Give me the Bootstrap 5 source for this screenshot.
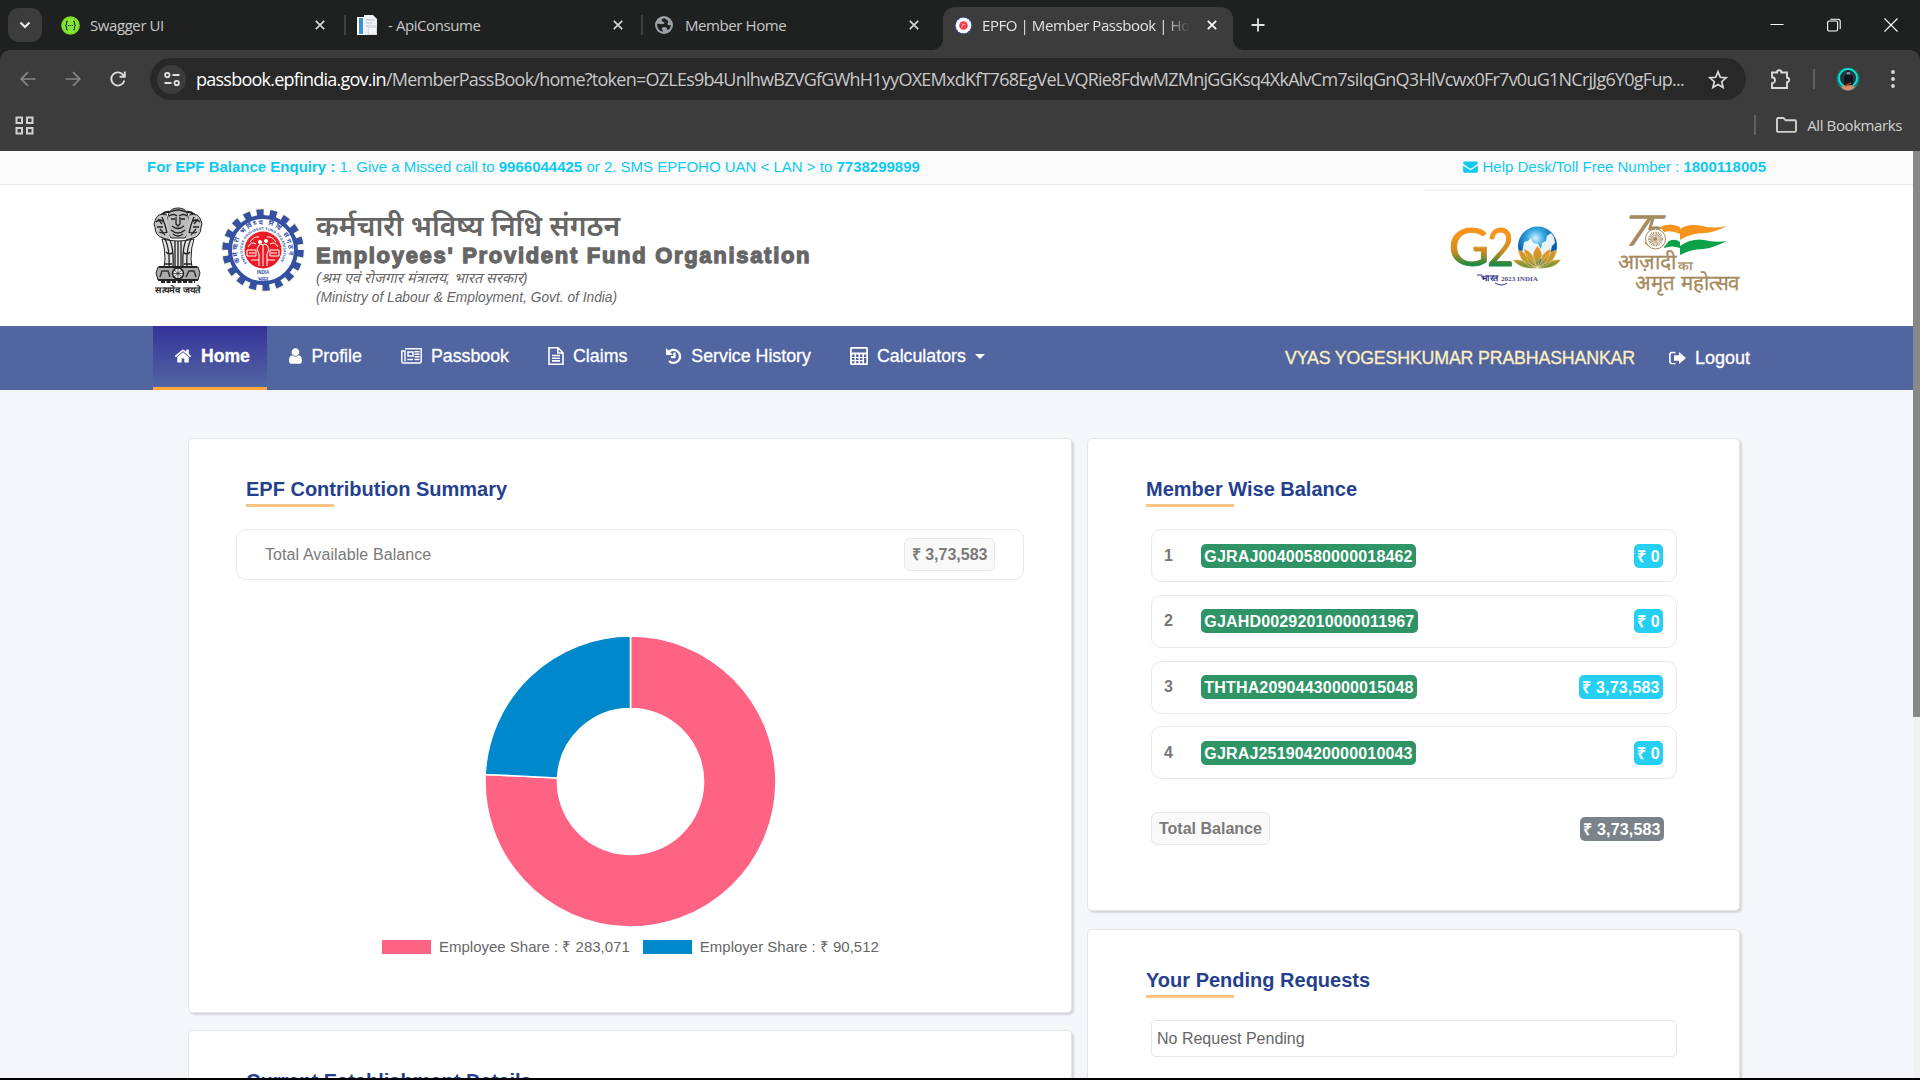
<!DOCTYPE html>
<html lang="en">
<head>
<meta charset="utf-8">
<title>EPFO | Member Passbook | Home</title>
<link href="https://cdn.jsdelivr.net/npm/bootstrap@5.3.0/dist/css/bootstrap.min.css" rel="stylesheet">
<style>
body{height:1080px;overflow:hidden;background:#000;font-family:"Liberation Sans",Arial,sans-serif;color:#666;line-height:1.5}
svg{display:block;flex:none;overflow:visible}
.chrome{font-family:"Open Sans","Noto Sans",sans-serif;color:#e3e3e3}
.tabstrip{height:50px;background:#1f2120;padding-left:8px}
.tabmenu{width:34px;height:34px;border-radius:11px;background:#3c3c3c}
.tab{height:50px;font-size:15px;letter-spacing:-.42px;color:#c7c7c7;white-space:nowrap}
.tab .tt{flex:1;overflow:hidden}
.tabsep{width:2px;height:20px;background:#3f4140}
.tab-on{background:#3c3c3c;height:43px;border-radius:12px 12px 0 0;align-self:flex-end;width:290px;padding:0 16px 7px 11px;position:relative;color:#e3e3e3}
.tab-on::before,.tab-on::after{content:"";position:absolute;bottom:0;width:12px;height:12px}
.tab-on::before{left:-12px;background:radial-gradient(circle at 0 0,transparent 12px,#3c3c3c 12.5px)}
.tab-on::after{right:-12px;background:radial-gradient(circle at 100% 0,transparent 12px,#3c3c3c 12.5px)}
.fade-t{-webkit-mask-image:linear-gradient(90deg,#000 88%,transparent);mask-image:linear-gradient(90deg,#000 88%,transparent)}
.toolbar{height:58px;background:#3c3c3c;border-radius:10px 10px 0 0}
.toolwrap{background:#1f2120}
.omni{width:1596px;height:42px;border-radius:21px;background:#282828;padding-left:7px;padding-right:18px}
.site{width:29px;height:29px;border-radius:50%;background:#3c3c3c}
.url{font-size:18px;color:#c7c7c7;white-space:nowrap;letter-spacing:-.753px}
.url b{font-weight:400;color:#fff}
.bmbar{height:43px;background:#3c3c3c;font-size:15px;letter-spacing:-.4px;color:#d2d2d2;padding:0 18px 9px 15px}
.vsep{width:2px;height:20px;background:#5f5f5f}
.pagebox{height:927px;background:#f5f6fa;overflow:hidden}
.scroller{width:7px;background:#f1f1f1}
.scroller div{height:566px;background:#888}
.topbar{height:34px;background:#fbfbfb;border-bottom:1px solid #ebebeb;color:#0dcaf0;font-size:15px;padding:0 147px 1px 147px}
.head{height:141px;background:#fff;padding:0 172px 0 153px}
.t-hi{font-size:28.2px;line-height:32px;font-weight:600;font-family:"Noto Sans","Noto Sans Devanagari",sans-serif}
.t-en{font-size:22px;line-height:24px;font-weight:700;-webkit-text-stroke:1.3px #666;letter-spacing:1.7px;padding-top:3px}
.t-sm{font-size:14.4px;line-height:20px;font-style:italic}
.t-xs{font-size:13.75px}
.mainnav{height:64px;background:#5165a1;padding-left:153px;padding-right:163px;font-size:17.8px;color:#fff;-webkit-text-stroke:.3px currentColor}
.navi{padding:0 19.5px 4px;gap:9px;height:64px}
.navi.on{font-weight:700;width:114px;padding:0 0 1px 21px;gap:9px;font-size:17.6px;background:linear-gradient(#35339a,#5165a1);border-bottom:3px solid #ffa83d}
.caret{border:5px solid transparent;border-top-color:#fff;border-bottom:0}
.uname{color:#ffefc1;letter-spacing:-.17px}
.lo{font-size:18px}
.pane{background:#fff;border:1px solid #e5e5e5;border-radius:5px;box-shadow:2px 2px 2px rgba(0,0,0,.13)}
.cols{padding:48px 0 0 188px;gap:15px}
.ttl{font-size:20px;font-weight:700;color:#243f8e;line-height:30px;margin:0;position:relative;height:34px}
.ttl::after{content:"";display:block;width:88px;height:3px;background:#fec587}
.avail{border:1px solid #e9e9e9;border-radius:10px;height:51px;margin:21px 47px 0 47px;padding:0 28px;color:#7a7a7a}
.chip{background:#f9f9f9;border:1px solid #e9e9e9;border-radius:6px;font-weight:700;color:#7a7a7a;padding:0 6.5px;height:33px;line-height:31px}
.lg{font-size:15px;gap:8px}
.sw{width:49px;height:14px}
.mrow{border:1px solid #e9e9e9;border-radius:10px;height:53px;margin-bottom:12.8px;padding:0 13px 0 12px;font-weight:700;color:#777}
.mrow .n{width:37px}
.bd{border-radius:5px;color:#fff;font-weight:700;height:24px;line-height:25px;padding:0 3.300px;letter-spacing:.17px}
.g{background:#2f9466}.c{background:#25cff2}.s{background:#7a828a}
</style>
</head>
<body>
<div class="chrome">
 <div class="tabstrip d-flex align-items-center">
  <div class="tabmenu d-flex align-items-center justify-content-center"><svg width="12" height="8" viewBox="0 0 12 8" fill="none" stroke="#e8e8e8" stroke-width="2.2"><path d="M1.5 1.5 6 6l4.500-4.500"/></svg></div>
  <div class="tab d-flex align-items-center" style="width:302px;padding:0 19px 0 19px">
   <svg width="19" height="19" viewBox="0 0 19 19"><circle cx="9.500" cy="9.500" r="9.300" fill="#85ea2d"/><circle cx="9.500" cy="9.500" r="8" fill="none" stroke="#6bc420" stroke-width=".6"/><path d="M6.800 5.200c-1.800 0-1.200 1.500-1.300 2.800 0 .9-.5 1.400-1.300 1.500.8.100 1.300.6 1.300 1.500.1 1.300-.5 2.800 1.300 2.800M12.200 5.200c1.800 0 1.200 1.500 1.300 2.800 0 .9.500 1.400 1.300 1.500-.8.100-1.300.6-1.300 1.500-.1 1.300.5 2.800-1.300 2.800" fill="none" stroke="#173647" stroke-width="1.200"/><path d="M7 9.500h5" stroke="#173647" stroke-width="1.200" stroke-dasharray="1.200 .7"/></svg>
   <span class="tt" style="margin-left:10px">Swagger UI</span><svg width="10" height="10" stroke="#d5d5d5" stroke-width="1.700"><path d="m.8.8 8.400 8.400m0-8.400L.8 9.200"/></svg></div>
  <div class="tabsep"></div>
  <div class="tab d-flex align-items-center" style="width:295px;padding:0 18px 0 11px">
   <svg width="21" height="21" viewBox="0 0 21 21"><path d="M0 2h14v18H0z" fill="#fff"/><path d="M2 3h4v16H2z" fill="#3c93cc"/><path d="M7 0h9l4 4v16H7z" fill="#eef0f3"/><path d="M9 5h8M9 8h6M9 11h5" stroke="#b9c0cb"/><path d="M11 10h9v10h-9z" fill="#d9dde3"/><path d="M12 13h7v6h-7z" fill="#f5f6f8"/></svg>
   <span class="tt" style="margin-left:10px">- ApiConsume</span><svg width="10" height="10" stroke="#d5d5d5" stroke-width="1.700"><path d="m.8.8 8.400 8.400m0-8.400L.8 9.200"/></svg></div>
  <div class="tabsep"></div>
  <div class="tab d-flex align-items-center" style="width:300px;padding:0 24px 0 12px">
   <svg width="18" height="18" viewBox="0 0 18 18"><circle cx="9" cy="9" r="9" fill="#9aa0a6"/><path d="M9.500 2.200c-2.300 0-3.200 1.600-2.600 2.800.6 1.100 2.100.4 2.500 1.400.4 1.200-1.200 1.200-2.300 1.900L2 7.800C2 12 4 15 8 15.800c.3-1.500-.9-1.800-1.200-2.800-.2-1 .6-1.400 1.400-2.100 1.300.2 2.600 0 3.300.8.800 1 .4 1.800 1.600 2.400 1.800-1.400 2.700-3 2.800-5-1.800.4-2.900.2-3.300-.9-.4-1.200.9-1.600.6-2.800-.3-1.400-1.800-1.600-3.700-3.200z" fill="#1f2120"/></svg>
   <span class="tt ms-2 ps-1">Member Home</span><svg width="10" height="10" stroke="#d5d5d5" stroke-width="1.700"><path d="m.8.8 8.400 8.400m0-8.400L.8 9.200"/></svg></div>
  <div class="tab tab-on d-flex align-items-center">
   <svg width="19" height="19" viewBox="0 0 19 19"><circle cx="9.500" cy="9.500" r="8" fill="#fff" stroke="#3f57b0" stroke-width="1.500" stroke-dasharray="1.700 1.450"/><circle cx="9.500" cy="9.500" r="7.400" fill="#fff"/><circle cx="9.500" cy="9.500" r="4.300" fill="#ef3f49"/><path d="m7.500 12 1.500-4 2.500 1" stroke="#fbb" fill="none" stroke-width=".8"/></svg>
   <span class="tt fade-t" style="max-width:208px;margin-left:9px">EPFO | Member Passbook | Home</span><svg class="ms-auto" width="10" height="10" stroke="#fff" stroke-width="1.700"><path d="m.8.8 8.400 8.400m0-8.400L.8 9.200"/></svg></div>
  <svg style="margin-left:18px" width="14" height="14" stroke="#e3e3e3" stroke-width="1.800"><path d="M7 .5v13M.5 7h13"/></svg>
  <div class="d-flex align-items-center ms-auto" style="gap:43px;padding-right:22px">
   <svg width="14" height="14" stroke="#fff"><path d="M.5 6.500h13"/></svg>
   <svg width="14" height="14" viewBox="0 0 14 14" fill="none" stroke="#fff" stroke-width="1.100"><rect x=".6" y="3" width="10" height="10" rx="1.600"/><path d="M3.400 1.200h7.500a2.300 2.300 0 0 1 2.300 2.300V11"/></svg>
   <svg width="14" height="14" stroke="#fff" stroke-width="1.100"><path d="m.5.5 13 13m0-13-13 13"/></svg>
  </div>
 </div>
 <div class="toolwrap"><div class="toolbar d-flex align-items-center">
  <svg width="16" height="16" style="margin-left:20px" fill="none" stroke="#858585" stroke-width="1.700"><path d="M15.500 8H1.500M8 1.200 1.200 8 8 14.800"/></svg>
  <svg width="16" height="16" style="margin-left:29px" fill="none" stroke="#858585" stroke-width="1.700"><path d="M.5 8h14M8 1.200 14.800 8 8 14.800"/></svg>
  <svg width="16" height="16" style="margin-left:29px" fill="none" stroke="#dadada" stroke-width="1.900"><path d="M14.300 9.500A6.600 6.600 0 1 1 13.500 4.500M14.800.5v5.300H9.500"/></svg>
  <div class="omni d-flex align-items-center" style="margin-left:24px">
   <div class="site d-flex align-items-center justify-content-center"><svg width="16" height="16" fill="none" stroke="#e3e3e3" stroke-width="1.800"><circle cx="3.300" cy="4" r="2.200"/><path d="M8.500 4h7M.5 12h7"/><circle cx="12.700" cy="12" r="2.200"/></svg></div>
   <span class="url" style="margin-left:10px"><b>passbook.epfindia.gov.in</b>/MemberPassBook/home?token=OZLEs9b4UnlhwBZVGfGWhH1yyOXEMxdKfT768EgVeLVQRie8FdwMZMnjGGKsq4XkAlvCm7siIqGnQ3HlVcwx0Fr7v0uG1NCrjJg6Y0gFup...</span>
   <svg class="ms-auto" width="20" height="19" viewBox="0 0 20 19" fill="none" stroke="#dadada" stroke-width="1.700"><path d="m10 1.800 2.300 5.500 5.900.5-4.500 3.900 1.400 5.800-5.100-3.100-5.100 3.100 1.400-5.800-4.500-3.900 5.900-.5z"/></svg>
  </div>
  <svg width="22" height="22" viewBox="0 0 22 22" style="margin-left:24px" fill="none" stroke="#dadada" stroke-width="1.900"><path d="M2 4.500h5a2 2 0 0 1 4.400 0h5.600v5.200a2 2 0 0 1 0 4.400V20H2v-4.700a3 3 0 0 0 0-6z"/></svg>
  <div class="vsep" style="margin-left:21px"></div>
  <svg width="24" height="24" viewBox="0 0 24 24" style="margin-left:21px"><circle cx="12" cy="12" r="11.500" fill="#127c78"/><circle cx="12" cy="11" r="9" fill="#1c3b46" stroke="#12e3cf" stroke-width="1.800"/><path d="M8 19V11q0-3 2-3.500 0-4 2.500-4T15 7.500q2.500 1 2 5L16.500 19z" fill="#141318"/><path d="M10.500 5.500q2-1.500 4 0v2h-4z" fill="#7b8aa0"/><path d="M5 20q3-3 7-1.500 4-1.500 7 1.500-3 3.500-7 3.500T5 20z" fill="#d98b6e"/><path d="m9 19 6-3" stroke="#a4402f" stroke-width="1.500"/></svg>
  <svg width="4" height="18" style="margin-left:31px" fill="#dadada"><circle cx="2" cy="2" r="1.900"/><circle cx="2" cy="9" r="1.900"/><circle cx="2" cy="16" r="1.900"/></svg>
 </div></div>
 <div class="bmbar d-flex align-items-center">
  <svg width="19" height="19" viewBox="0 0 19 19" fill="none" stroke="#d0d0d0" stroke-width="2"><path d="M1.500 1.500h5.500v5.500H1.500zM12 1.500h5.500v5.500H12zM1.500 12h5.500v5.500H1.500zM12 12h5.500v5.500H12z"/></svg>
  <div class="vsep ms-auto"></div>
  <svg width="21" height="16" viewBox="0 0 21 16" style="margin:0 10px 0 20px" fill="none" stroke="#d0d0d0" stroke-width="1.900"><path d="M1 13.500V2.300Q1 1 2.300 1H7.500l2.200 2.300h9Q20 3.300 20 4.600v8.900q0 1.400-1.300 1.400H2.300Q1 14.900 1 13.500z"/></svg>
  <span>All Bookmarks</span>
 </div>
</div>

<div class="pagebox d-flex">
 <div class="flex-grow-1">
  <div class="topbar d-flex align-items-center justify-content-between">
   <span><b>For EPF Balance Enquiry :</b> 1. Give a Missed call to <b>9966044425</b> or 2. SMS EPFOHO UAN &lt; LAN &gt; to <b>7738299899</b></span>
   <span class="d-flex align-items-center gap-1"><svg width="15" height="12" viewBox="0 0 16 13" fill="#0dcaf0"><path d="M0 2q0-1.500 1.500-1.500h13Q16 .5 16 2q0 1-1.200 1.900L9.200 7.800q-1.200.8-2.400 0L1.200 3.900Q0 3 0 2zM0 4.800l6 4.200q2 1.300 4 0l6-4.200v6.400q0 1.500-1.500 1.500h-13Q0 12.700 0 11.200z"/></svg><span>Help Desk/Toll Free Number : <b>1800118005</b></span></span>
  </div>
  <header class="head d-flex">
   <svg width="50" height="88" viewBox="0 0 50 88" style="margin-top:22px" fill="none" stroke="#222" stroke-width="1">
    <path d="M8 8q6-5 11-2M42 8q-6-5-11-2" stroke-width="2"/>
    <path d="M16 6q2-5 9-5t9 5l3 10q0 9-5 15H18q-5-6-5-15z" fill="#bbb"/>
    <path d="M17 5q8-4 16 0M16 9q5-3 8 0M26 9q5-3 8 0M18 12h4m6 0h4M23 10v7l2 2 2-2v-7M19 19q6 5 12 0M18 23q7 6 14 0M20 27q5 4 10 0" stroke-width="1.300"/>
    <path d="M14 8Q4 5 2 14q-2 3 0 6 0 9 8 11l7 2M36 8q10-3 12 6 2 3 0 6 0 9-8 11l-7 2" fill="#c4c4c4"/>
    <path d="M3 15q4-4 8 0M4 20h6M6 25q4 2 8 0M47 15q-4-4-8 0M46 20h-6M44 25q-4 2-8 0M9 10l3 8 2 8M41 10l-3 8-2 8M5 12l4 5M45 12l-4 5M7 22l5 6M43 22l-5 6" stroke-width="1.300"/>
    <path d="M9 32q3 8 3 20l-1 8h28l-1-8q0-12 3-20-16 4-32 0z" fill="#e2e2e2"/>
    <path d="M12 32q5 10 4 28M17 33q4 10 3 27M22 34v26M28 34v26M33 33q-4 10-3 27M38 32q-5 10-4 28M25 34v25M13 45q4 4 7 0M30 45q4 4 7 0M11 57h8M31 57h8" stroke-width="1.300"/>
    <path d="M5 60h40l2 6-2 7H5l-2-7z" fill="#aaa"/><path d="M6 60h38M5 73h40" stroke-width="2"/>
    <circle cx="25" cy="66.500" r="5.500" fill="#eee" stroke-width="1.500"/><path d="M25 61v11M19.500 66.500h11M21 63l8 7M29 63l-8 7" stroke-width=".7"/>
    <path d="m7 70 2-6h6l2 6M33 70l3-6h5l2 6" stroke="#333" stroke-width="1.500"/>
    <path d="M8 75h34" stroke-width="2" stroke-dasharray="4 1.500"/>
    <text x="25" y="86" font-size="8.500" font-weight="700" text-anchor="middle" fill="#222" stroke="none" textLength="46" lengthAdjust="spacingAndGlyphs">सत्यमेव जयते</text>
   </svg>
   <svg width="84" height="84" viewBox="-42 -42 84 84" style="margin:23px 0 0 18px">
    <circle r="37" fill="none" stroke="#f3f1cc" stroke-width="9.500" stroke-dasharray="8.800 4.117" stroke-dashoffset="1"/>
    <circle r="37" fill="none" stroke="#3450a3" stroke-width="7.500" stroke-dasharray="6.800 6.117"/>
    <circle r="33" fill="#fff" stroke="#3450a3" stroke-width="4"/>
    <circle r="18.500" fill="#ec1c24"/>
    <g fill="none" stroke="#fff" stroke-width="1"><path d="M-15-3q3-6 8-3M15-3q-3-6-8-3M-16 0h9v6h-9zM16 0H7v6h9zM-12 10h8M12 10H4M-13-8q4-6 9-5M13-8q-4-6-9-5M-14 3h6M14 3H8"/><path d="M-4 16v-12l-2-5 2-4q2-2 4 0l0 21M4 16v-12l2-5-2-4q-2-2-4 0" fill="#ec1c24"/><circle cx="-3" cy="-8" r="1.600" fill="#fff"/><circle cx="3" cy="-9" r="1.600" fill="#fff"/></g>
    <defs><path id="arcA" d="M-22.500 12A25.500 25.500 0 1 1 22.500 12"/><path id="arcB" d="M-16 13A20.500 20.500 0 1 1 16 13"/></defs>
    <g fill="#3450a3" font-weight="700"><text font-size="6.800" textLength="97"><textPath href="#arcA" textLength="97">कर्मचारी भविष्य निधि संगठन</textPath></text>
    <text font-size="3.600"><textPath href="#arcB" textLength="89">EMPLOYEES PROVIDENT FUND ORGANISATION</textPath></text>
    <text y="24" font-size="4.500" text-anchor="middle">INDIA</text><text y="30.500" font-size="5.500" text-anchor="middle">भारत</text></g>
   </svg>
   <div style="padding:24px 0 0 11px">
    <div class="t-hi"><span>कर्मचारी भविष्य निधि संगठन</span></div>
    <div class="t-en"><span>Employees' Provident Fund Organisation</span></div>
    <div class="t-sm"><span>(श्रम एवं रोजगार मंत्रालय, भारत सरकार)</span></div>
    <div class="t-sm t-xs"><span>(Ministry of Labour &amp; Employment, Govt. of India)</span></div>
   </div>
   <div class="ms-auto" style="width:169px;padding-top:5px;margin-right:25px"><div style="height:1px;background:#eee"></div>
    <svg width="169" height="100" viewBox="1423 191 169 100">
     <defs><linearGradient id="g2" x1="0" y1="0" x2="0" y2="1"><stop offset=".35" stop-color="#f7941d"/><stop offset=".6" stop-color="#c98a22"/><stop offset=".8" stop-color="#1f8a44"/></linearGradient>
     <radialGradient id="gl" cx=".45" cy=".3"><stop offset="0" stop-color="#d8f2fd"/><stop offset=".45" stop-color="#35a8e0"/><stop offset="1" stop-color="#075da8"/></radialGradient>
     <linearGradient id="lo" x1="0" y1="0" x2="0" y2="1"><stop offset="0" stop-color="#f68a1e"/><stop offset=".6" stop-color="#c39a2b"/><stop offset="1" stop-color="#5e8e35"/></linearGradient></defs>
     <g font-family="Lato" font-size="53" fill="url(#g2)" stroke="url(#g2)" stroke-width=".9"><text x="1447.500" y="266" textLength="41" lengthAdjust="spacingAndGlyphs">G</text><text x="1486" y="266" textLength="27" lengthAdjust="spacingAndGlyphs">2</text></g>
     <circle cx="1536.500" cy="246" r="19.500" fill="url(#gl)"/>
     <path d="M1522 248l1-6 4-1 3-3 2 5 5 1 3 5 1-6 4-2 1-5 4-3 3 4 1 6-3 3-2 8-6 4-17 1-5-7z" fill="#fff" opacity=".9"/>
     <path d="M1512 260q9-2 24 8-16 2-24-8zM1560 260q-9-2-24 8 16 2 24-8zM1517 250q10 2 19 18-15-1-19-18zM1556 250q-10 2-20 18 16-1 20-18zM1523 249q10 3 13 19-11-4-13-19zM1550 249q-10 3-14 19 12-4 14-19zM1536.500 246q9 10 0 22-9-12 0-22z" fill="url(#lo)" stroke="#f7d7a0" stroke-width=".5"/>
     <text x="1480" y="281" font-size="8.500" font-weight="700" fill="#2c2c86" textLength="17" lengthAdjust="spacingAndGlyphs">भारत</text><path d="M1476 275h5M1494 283q7 4 12 0" stroke="#2c2c86" fill="none"/>
     <text x="1500" y="280.500" font-size="7" font-family="Liberation Serif" font-weight="700" fill="#4d4d90" textLength="37" lengthAdjust="spacingAndGlyphs">2023 INDIA</text>
    </svg></div>
   <svg width="123" height="95" viewBox="1618 205 123 95" style="margin-top:20px">
    <g fill="#a58a5e" font-family="Lato"><text x="0" y="0" font-size="43" transform="translate(1623 246) skewX(-8)" textLength="27" lengthAdjust="spacingAndGlyphs">7</text>
    <text x="0" y="0" font-size="43" transform="translate(1642 246) skewX(-8)" textLength="23" lengthAdjust="spacingAndGlyphs">5</text></g>
    <path d="M1660 229q9-7 20-3 3 2 1 7l-3 14q-8-3-16 3z" fill="#fff"/>
    <path d="M1660 227q10-5 20 0v7q-8-4-16-2zM1680 229q8-6 22-3 12 3 25 0-14 7-22 7-14 0-25 7z" fill="#f7941d"/>
    <path d="M1664 247l5-6q6-3 11 1v6q-8-3-16 0zM1680 246q12-8 24-6 12 3 23 1-14 7-24 8-12 0-23 6z" fill="#0ba14b"/>
    <circle cx="1655.500" cy="239" r="10" fill="#fff" stroke="#a58a5e" stroke-width="1"/><circle cx="1655.500" cy="239" r="4.200" fill="none" stroke="#a58a5e" stroke-width="6.500" stroke-dasharray=".55 .55"/><circle cx="1655.500" cy="239" r="1.800" fill="#a58a5e"/>
    <g fill="#a58a5e" stroke="#a58a5e" stroke-width=".3"><text x="1618" y="268.500" font-size="21" textLength="58" lengthAdjust="spacingAndGlyphs">आज़ादी</text><text x="1678" y="270" font-size="12" textLength="14" lengthAdjust="spacingAndGlyphs">का</text><text x="1635" y="289.500" font-size="21" textLength="105" lengthAdjust="spacingAndGlyphs">अमृत महोत्सव</text></g>
   </svg>
  </header>
  <nav class="mainnav d-flex">
   <div class="navi on d-flex align-items-center"><svg width="18" height="18" viewBox="0 0 1792 1792" fill="#fff"><path d="M1472 992v480q0 26-19 45t-45 19h-384v-384h-256v384h-384q-26 0-45-19t-19-45v-480q0-1 .5-3t.5-3l575-474 575 474q1 2 1 6zm223-69l-62 74q-8 9-21 11h-3q-13 0-21-7l-692-577-692 577q-12 8-24 7-13-2-21-11l-62-74q-8-10-7-23.500t11-21.500l719-599q32-26 76-26t76 26l244 204v-195q0-14 9-23t23-9h192q14 0 23 9t9 23v408l219 182q10 8 11 21.500t-7 23.500z"/></svg><span>Home</span></div>
   <div class="navi d-flex align-items-center"><svg style="margin-left:1px" width="15" height="18" viewBox="200 0 1400 1792" fill="#fff"><path d="M1536 1399q0 109-62.500 187t-150.500 78h-854q-88 0-150.500-78t-62.500-187q0-85 8.500-160.500t31.500-152 58.500-131 94-89 134.500-34.500q131 128 313 128t313-128q76 0 134.500 34.500t94 89 58.500 131 31.500 152 8.500 160.500zm-256-887q0 159-112.500 271.500t-271.500 112.500-271.500-112.500-112.500-271.500 112.500-271.500 271.500-112.500 271.500 112.500 112.500 271.500z"/></svg><span>Profile</span></div>
   <div class="navi d-flex align-items-center"><svg width="21" height="16" viewBox="0 0 21 16" fill="none" stroke="#fff" stroke-width="1.500"><path d="M4 .8h16.200v12.700q0 1.600-1.500 1.600H2.200Q.8 15.100.8 13.500V3H4v10.500M7 4h5v4H7zM13.500 3.800h5M13.500 6.200h5M13.500 8.700h5M6.300 11.500h5.700M13.500 11.500h5"/></svg><span>Passbook</span></div>
   <div class="navi d-flex align-items-center"><svg width="16" height="18" viewBox="0 0 16 18" fill="none" stroke="#fff" stroke-width="1.600"><path d="M1 .8h9l5 5v11.400H1zM9.800.8v5.200H15M4 8.500h8M4 11.200h8M4 13.900h8"/></svg><span>Claims</span></div>
   <div class="navi d-flex align-items-center"><svg width="16" height="17" viewBox="0 0 16 17" fill="none" stroke="#fff" stroke-width="2.300"><path d="M2.300 4.500A6.500 6.500 0 1 1 3 13M8.500 4.500v4.700H5"/><path d="M0 0v7h7z" fill="#fff" stroke="none"/></svg><span>Service History</span></div>
   <div class="navi d-flex align-items-center"><svg width="18" height="18" viewBox="0 0 18 18"><rect width="18" height="18" rx="1.500" fill="#fff"/><path d="M1.800 1.800h14.400v3.700H1.800zM2 7.500h2.500V10H2zM6 7.500h2.500V10H6zM10 7.500h2.500V10H10zM14 7.500h2.300V10H14zM2 11h2.500v2H2zM6 11h2.500v2H6zM10 11h2.500v2H10zM14 11h2.300v5.300H14zM2 14.300h2.500v2H2zM6 14.300h2.500v2H6zM10 14.300h2.500v2H10z" fill="#5165a1"/></svg><span>Calculators</span><i class="caret"></i></div>
   <div class="d-flex align-items-center ms-auto"><span class="uname">VYAS YOGESHKUMAR PRABHASHANKAR</span><svg style="margin:0 9px 0 34px" width="17" height="14" viewBox="0 0 17 14" fill="#fff"><path d="M6.500 12v1.300H3Q0 13.300 0 10.300V3.700Q0 .7 3 .7h3.500V2.200H3.200q-1.500 0-1.500 1.500v6.600q0 1.700 1.500 1.700zM10 1l7 6-7 6V9.700H5V4.300h5z"/></svg><span class="lo">Logout</span></div>
  </nav>
  <main class="cols d-flex align-items-start">
   <div style="width:884px">
    <section class="pane" style="height:575px;padding-top:35px">
     <h2 class="ttl" style="margin-left:57px"><span>EPF Contribution Summary</span></h2>
     <div class="avail d-flex align-items-center justify-content-between"><span style="letter-spacing:.09px">Total Available Balance</span><span class="chip">₹ 3,73,583</span></div>
     <svg style="margin:56px auto 0" width="291" height="291" viewBox="-145.500 -145.500 291 291" stroke="#fff" stroke-width="1.600"><path d="M0-145.500A145.500 145.500 0 1 1-145.330-7.040L-72.920-3.530A73 73 0 1 0 0-73z" fill="#ff6384"/><path d="M-145.330-7.040A145.500 145.500 0 0 1 0-145.500V-73A73 73 0 0 0-72.920-3.530z" fill="#0088cc"/></svg>
     <div class="d-flex lg align-items-center" style="margin:9px 0 0 193px"><i class="sw" style="background:#ff6384"></i><span>Employee Share : ₹ 283,071</span><i class="sw" style="background:#0088cc;margin-left:5px"></i><span>Employer Share : ₹ 90,512</span></div>
    </section>
    <section class="pane" style="height:300px;padding-top:35px;margin-top:17px"><h2 class="ttl" style="margin-left:57px"><span>Current Establishment Details</span></h2></section>
   </div>
   <div style="width:653px">
    <section class="pane" style="height:473px;padding:35px 62px 0 58px">
     <h2 class="ttl"><span>Member Wise Balance</span></h2>
     <div style="margin:21px 0 0 5px">
      <div class="mrow d-flex align-items-center"><span class="n">1</span><span class="bd g">GJRAJ00400580000018462</span><span class="bd c ms-auto">₹ 0</span></div>
      <div class="mrow d-flex align-items-center"><span class="n">2</span><span class="bd g">GJAHD00292010000011967</span><span class="bd c ms-auto">₹ 0</span></div>
      <div class="mrow d-flex align-items-center"><span class="n">3</span><span class="bd g">THTHA20904430000015048</span><span class="bd c ms-auto">₹ 3,73,583</span></div>
      <div class="mrow d-flex align-items-center"><span class="n">4</span><span class="bd g">GJRAJ25190420000010043</span><span class="bd c ms-auto">₹ 0</span></div>
      <div class="d-flex align-items-center justify-content-between" style="padding:20px 13px 0 0"><span class="chip" style="padding:0 7px">Total Balance</span><span class="bd s">₹ 3,73,583</span></div>
     </div>
    </section>
    <section class="pane" style="height:300px;margin-top:18px;padding:35px 62px 0 58px">
     <h2 class="ttl"><span>Your Pending Requests</span></h2>
     <div class="d-flex align-items-center" style="height:37px;margin:21px 0 0 5px;border:1px solid #e5e5e5;border-radius:5px;padding-left:5px"><span>No Request Pending</span></div>
    </section>
   </div>
  </main>
 </div>
 <div class="scroller"><div></div></div>
</div>
<script src="https://cdn.jsdelivr.net/npm/bootstrap@5.3.0/dist/js/bootstrap.bundle.min.js"></script>
</body>
</html>
